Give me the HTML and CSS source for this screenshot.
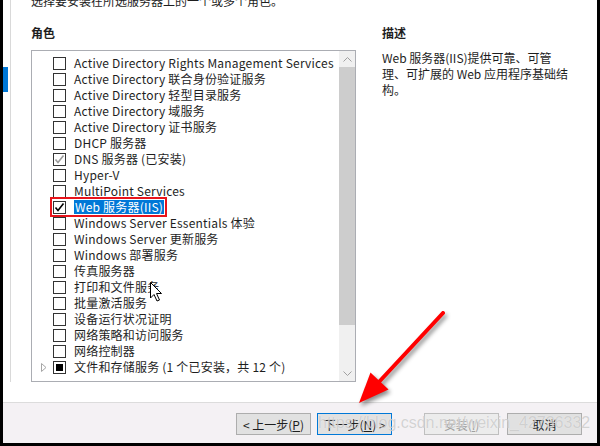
FILE: index.html
```html
<!DOCTYPE html>
<html lang="zh-CN">
<head>
  <meta charset="UTF-8" />
  <title>添加角色和功能向导</title>
  <link rel="stylesheet" href="styles.css">
</head>
<body>
  <div class="window">
    <div class="main">
      <div class="nav">
        <div class="nav-item active"></div>
      </div>
      <div class="content">
        <div class="left">
          <p class="intro">选择要安装在所选服务器上的一个或多个角色。</p>
          <h2 class="label">角色</h2>
          <div class="listbox">
            <ul class="roles">
              <li class="role"><span class="expander"></span><span class="check"></span><span class="name">Active Directory Rights Management Services</span></li>
              <li class="role"><span class="expander"></span><span class="check"></span><span class="name">Active Directory 联合身份验证服务</span></li>
              <li class="role"><span class="expander"></span><span class="check"></span><span class="name">Active Directory 轻型目录服务</span></li>
              <li class="role"><span class="expander"></span><span class="check"></span><span class="name">Active Directory 域服务</span></li>
              <li class="role"><span class="expander"></span><span class="check"></span><span class="name">Active Directory 证书服务</span></li>
              <li class="role"><span class="expander"></span><span class="check"></span><span class="name">DHCP 服务器</span></li>
              <li class="role"><span class="expander"></span><span class="check check_dim"><svg viewBox="0 0 11 11" width="11" height="11"><polyline points="1.5,5.5 4,8.5 9.5,1.5" /></svg></span><span class="name">DNS 服务器 (已安装)</span></li>
              <li class="role"><span class="expander"></span><span class="check"></span><span class="name">Hyper-V</span></li>
              <li class="role"><span class="expander"></span><span class="check"></span><span class="name">MultiPoint Services</span></li>
              <li class="role"><span class="expander"></span><span class="pick"><span class="check check_on"><svg viewBox="0 0 11 11" width="11" height="11"><polyline points="1.5,5.5 4,8.5 9.5,1.5" /></svg></span><span class="name name_sel">Web 服务器(IIS)</span></span></li>
              <li class="role"><span class="expander"></span><span class="check"></span><span class="name">Windows Server Essentials 体验</span></li>
              <li class="role"><span class="expander"></span><span class="check"></span><span class="name">Windows Server 更新服务</span></li>
              <li class="role"><span class="expander"></span><span class="check"></span><span class="name">Windows 部署服务</span></li>
              <li class="role"><span class="expander"></span><span class="check"></span><span class="name">传真服务器</span></li>
              <li class="role"><span class="expander"></span><span class="check"></span><span class="name">打印和文件服务</span></li>
              <li class="role"><span class="expander"></span><span class="check"></span><span class="name">批量激活服务</span></li>
              <li class="role"><span class="expander"></span><span class="check"></span><span class="name">设备运行状况证明</span></li>
              <li class="role"><span class="expander"></span><span class="check"></span><span class="name">网络策略和访问服务</span></li>
              <li class="role"><span class="expander"></span><span class="check"></span><span class="name">网络控制器</span></li>
              <li class="role"><span class="expander"><svg viewBox="0 0 6 9" width="6" height="9"><polygon points="0.5,0.5 5,4.5 0.5,8.5" /></svg></span><span class="check check_part"></span><span class="name">文件和存储服务 (1 个已安装，共 12 个)</span></li>
            </ul>
            <div class="scrollbar">
              <span class="arrow"><svg viewBox="0 0 9 5" width="9" height="5"><polyline points="0.5,4.5 4.5,0.5 8.5,4.5" /></svg></span>
              <span class="thumb"></span>
              <span class="track"></span>
              <span class="arrow"><svg viewBox="0 0 9 5" width="9" height="5"><polyline points="0.5,0.5 4.5,4.5 8.5,0.5" /></svg></span>
            </div>
          </div>
        </div>
        <div class="right">
          <h2 class="label">描述</h2>
          <p class="desc">Web 服务器(IIS)提供可靠、可管理、可扩展的 Web 应用程序基础结构。</p>
        </div>
      </div>
    </div>
    <div class="footer">
      <button class="btn">&lt; 上一步(<u>P</u>)</button>
      <button class="btn btn_focus">下一步(<u>N</u>) &gt;</button>
      <button class="btn btn_off">安装(<u>I</u>)</button>
      <button class="btn">取消</button>
    </div>
  </div>

  <!-- 注释用的箭头和鼠标 -->
  <svg class="annot" viewBox="0 0 600 446" width="600" height="446">
    <g class="red-arrow">
      <line x1="443" y1="313" x2="378" y2="383" />
      <polygon points="359,403 370.5,372.5 388.5,389.5" />
    </g>
    <path class="cursor" d="M150.5,282.5 L150.5,298 L154,294.5 L157,301 L159.5,300 L156.5,293.5 L161.5,293.5 Z" />
  </svg>
  <div class="watermark">https://blog.csdn.net/weixin_42736332</div>
</body>
</html>
```

FILE: styles.css
```css
body {
  margin: 0;
  background-color: #000;
  font-family: "Noto Sans CJK SC", "Noto Sans", sans-serif;
  font-size: 12px;
  color: #1e1e1e;
  overflow: hidden;
}

.window {
  width: 594px;
  height: 443px;
  margin: 0 3px;
  background-color: #fff;
  display: flex;
  flex-direction: column;
  overflow: hidden;
}

.main {
  height: 402px;
  border-bottom: 1px solid #dcdcdc;
  display: flex;
}

.nav {
  width: 7px;
  height: 382px;
  border-right: 1px solid #d9d9d9;
}

.nav-item {
  height: 25px;
}

.nav-item.active {
  width: 5px;
  margin-top: 67px;
  background-color: #0078d7;
}

.content {
  display: flex;
  padding-left: 20px;
}

.left {
  width: 325px;
}

.intro {
  margin: -7px 0 16px;
  line-height: 16px;
  white-space: nowrap;
}

.label {
  margin: 0 0 9px;
  font-size: 12px;
  font-weight: 600;
  line-height: 16px;
}

.listbox {
  height: 332px;
  border: 1px solid #abadb3;
  box-sizing: border-box;
  display: flex;
}

.roles {
  flex: 1;
  list-style: none;
  margin: 0;
  padding: 4px 0 0 9px;
  overflow: hidden;
  letter-spacing: 0.2px;
}

.role {
  height: 16px;
  display: flex;
  align-items: center;
  white-space: nowrap;
}

.expander {
  width: 12px;
  display: flex;
  align-items: center;
}

.expander polygon {
  fill: none;
  stroke: #a6a6a6;
}

.check {
  width: 13px;
  height: 13px;
  border: 1px solid #333;
  box-sizing: border-box;
  background-color: #fff;
  margin-right: 8px;
  display: flex;
  align-items: center;
  justify-content: center;
  flex-shrink: 0;
}

.check polyline {
  fill: none;
  stroke: #000;
  stroke-width: 1.6;
}

.check_dim polyline {
  stroke: #9a9a9a;
}

.check_part::after {
  content: "";
  width: 7px;
  height: 7px;
  background-color: #000;
}

.name {
  line-height: 16px;
}

.pick {
  display: flex;
  align-items: center;
  height: 14px;
  outline: 2px solid #e8141b;
  outline-offset: 1px;
}

.name_sel {
  background-color: #0078d7;
  color: #fff;
  line-height: 14px;
  padding: 0 1px;
}

.scrollbar {
  width: 16px;
  background-color: #f0f0f0;
  display: flex;
  flex-direction: column;
}

.arrow {
  height: 16px;
  display: flex;
  align-items: center;
  justify-content: center;
}

.arrow polyline {
  fill: none;
  stroke: #a0a0a0;
}

.thumb {
  height: 258px;
  background-color: #cdcdcd;
}

.track {
  flex: 1;
}

.right {
  width: 192px;
  margin-left: 26px;
  padding-top: 25px;
}

.desc {
  margin: 0;
  line-height: 16px;
}

.footer {
  flex: 1;
  background-color: #f4f1f4;
  display: flex;
  justify-content: flex-end;
  align-items: flex-start;
  padding: 10px 15px 0 0;
}

.btn {
  width: 75px;
  height: 22px;
  margin-left: 8px;
  padding: 0;
  border: 1px solid #adadad;
  background-color: #e1e1e1;
  font-family: inherit;
  font-size: 12px;
  color: #1e1e1e;
}

.btn_focus {
  margin-left: 6px;
  border-color: #0078d7;
}

.btn_off {
  margin-left: 32px;
  border-color: #bfbfbf;
  background-color: #ececec;
  color: #a0a0a0;
}

.annot {
  position: absolute;
  left: 0;
  top: 0;
  pointer-events: none;
}

.red-arrow {
  filter: drop-shadow(2px 3px 2px rgba(0, 0, 0, 0.45));
}

.red-arrow line {
  stroke: #ff0000;
  stroke-width: 4;
  stroke-linecap: round;
}

.red-arrow polygon {
  fill: #ff0000;
}

.cursor {
  fill: #fff;
  stroke: #000;
  stroke-width: 1;
}

.watermark {
  position: absolute;
  left: 318px;
  top: 414px;
  font-family: "Liberation Sans", sans-serif;
  font-size: 16px;
  color: rgba(170, 170, 170, 0.5);
  text-shadow: 0 0 1px rgba(255, 255, 255, 0.8);
  white-space: nowrap;
  pointer-events: none;
}
```
